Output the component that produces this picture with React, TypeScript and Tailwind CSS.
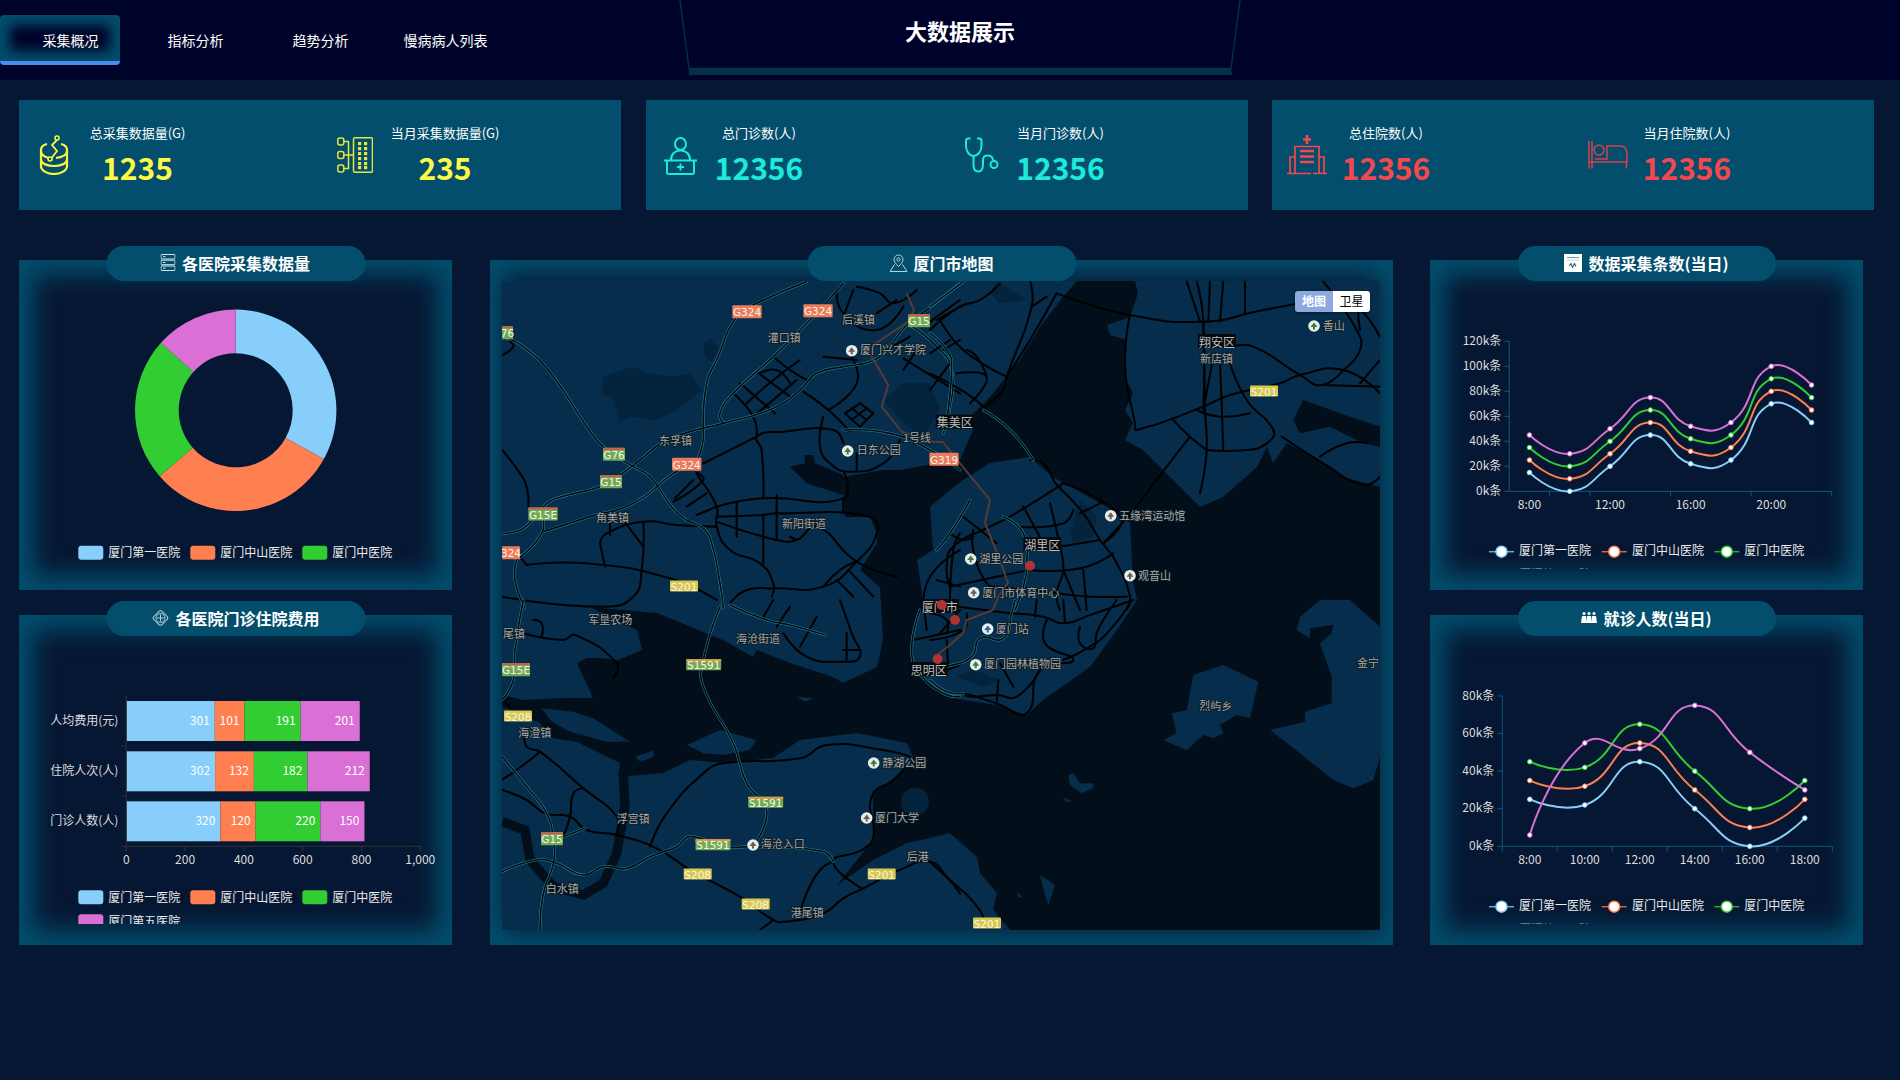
import React from 'react';

const BLUE = '#87cefa', ORANGE = '#ff7f50', GREEN = '#32cd32', PURPLE = '#da70d6';
const LABEL = '#dddddd';

/* ---------- icons ---------- */
const IconDb = () => (
  <svg viewBox="0 0 30 40" className="w-[30px] h-[40px]" fill="none" stroke="#fdf53f" strokeWidth="2.2">
    <path d="M8 9C4 10 2 12 2 15V31C2 36 9 39 15 39C21 39 28 36 28 31V15C28 12 26 10 22 9" />
    <path d="M2 24C2 29 9 31 15 31C21 31 28 29 28 24" />
    <path d="M2 16C2 20 6 22 10 23M28 16C28 20 24 22 17 23" />
    <path d="M18 5L13 10L18 16L12.5 23" strokeWidth="1.8" />
    <circle cx="18" cy="3" r="2" strokeWidth="1.6" />
    <circle cx="11" cy="24" r="2" strokeWidth="1.6" />
  </svg>
);
const IconNodes = () => (
  <svg viewBox="0 0 36 36" className="w-[36px] h-[36px]" fill="none" stroke="#e9e63f" strokeWidth="1.5">
    <rect x="16.5" y="0.8" width="19" height="34.4" rx="1.5" />
    <rect x="0.8" y="1" width="6" height="7" rx="2" />
    <rect x="0.8" y="14.5" width="6" height="7" rx="2" />
    <rect x="0.8" y="28" width="6" height="7" rx="2" />
    <path d="M7 4.5H11.5V31.5H7M7 18H16.5" />
    <g fill="#e9e63f" stroke="none">
      {[5, 10, 15, 20, 25, 29].map((y) => (
        <React.Fragment key={y}>
          <rect x="21" y={y} width="3.2" height="3.2" />
          <rect x="27" y={y} width="3.2" height="3.2" />
        </React.Fragment>
      ))}
    </g>
  </svg>
);
const IconNurse = () => (
  <svg viewBox="0 0 33 38" className="w-[33px] h-[38px]" fill="none" stroke="#1de9dc" strokeWidth="2">
    <ellipse cx="16.5" cy="7" rx="5.5" ry="6" />
    <path d="M7 23C7 17 11 13.5 16.5 13.5S26 17 26 23" />
    <path d="M0 23.5H33" />
    <path d="M3 24V35.5Q3 37 5 37H28Q30 37 30 35.5V24" />
    <path d="M16.5 26.5V33.5M13 30H20" strokeWidth="2" />
  </svg>
);
const IconScope = () => (
  <svg viewBox="0 0 34 36" className="w-[34px] h-[36px]" fill="none" stroke="#1de9dc" strokeWidth="2">
    <path d="M5.5 1.5H3Q1 1.5 1 4V9C1 15 5 19 8.5 19C12 19 16.5 15 16.5 9V4Q16.5 1.5 14.5 1.5H12" />
    <path d="M8.5 19V28C8.5 33 11 34.5 13.5 34.5C17 34.5 18 31 18 27V23C18 20 20 18.5 22.5 18.5C25 18.5 27.5 20 28 23" />
    <circle cx="29" cy="27.5" r="3.5" />
  </svg>
);
const IconHospital = () => (
  <svg viewBox="0 0 40 40" className="w-[40px] h-[40px]" fill="none" stroke="#f4474f" strokeWidth="1.7">
    <path d="M20 0V9M16 4.5H24" strokeWidth="2.6" />
    <path d="M8 38V11.5H32V38" />
    <path d="M13 16H27M13 21.5H27M13 27H27" strokeWidth="2.4" />
    <path d="M8 22H3V38M32 22H37V38M0 38.5H24M26 38.5H40" />
  </svg>
);
const IconBed = () => (
  <svg viewBox="0 0 40 28" className="w-[40px] h-[28px]" fill="none" stroke="#d8404c" strokeWidth="1.5">
    <path d="M1 0V27.5M1 21H38.5V27.5M4 0V27.5" />
    <circle cx="11" cy="9" r="5" />
    <path d="M7 18H19V5H32Q39 5 39 13V21" />
  </svg>
);
const PillServer = () => (
  <svg viewBox="0 0 15 17" className="w-[15px] h-[17px]" fill="none" stroke="#d5e6ec" strokeWidth="1">
    <rect x="0.5" y="0.5" width="14" height="4.5" rx="0.5" />
    <rect x="0.5" y="6.2" width="14" height="4.5" rx="0.5" />
    <rect x="0.5" y="12" width="14" height="4.5" rx="0.5" />
    <path d="M2.5 2.7H5M2.5 8.5H5M2.5 14.2H5" />
  </svg>
);
const PillDiamond = () => (
  <svg viewBox="0 0 18 18" className="w-[18px] h-[18px]" fill="none" stroke="#b9d2dc" strokeWidth="1">
    <rect x="3.2" y="3.2" width="11.6" height="11.6" rx="2.5" transform="rotate(45 9 9)" />
    <circle cx="9" cy="9" r="4.5" />
    <path d="M9 5.5V12.5M5.5 9H12.5" />
  </svg>
);
const PillPin = () => (
  <svg viewBox="0 0 18 18" className="w-[18px] h-[18px]" fill="none" stroke="#b9d2dc" strokeWidth="1">
    <path d="M9 12.5C6 9.5 4.5 7.5 4.5 5.5A4.5 4.5 0 0 1 13.5 5.5C13.5 7.5 12 9.5 9 12.5Z" />
    <circle cx="9" cy="5.5" r="1.6" />
    <path d="M5 10.5L0.5 17.5H17.5L13 10.5" />
  </svg>
);
const PillDoc = () => (
  <svg viewBox="0 0 18 18" className="w-[18px] h-[18px]">
    <rect width="18" height="18" fill="#ffffff" />
    <path d="M3 3.5H15" stroke="#6f97a8" strokeWidth="1" />
    <path d="M3 6H15" stroke="#c9d8de" strokeWidth="1" />
    <path d="M5 12L7 9.5L8.5 13.5L10.5 9.5L12 12.5" fill="none" stroke="#2f5f74" strokeWidth="1.1" />
  </svg>
);
const PillGroup = () => (
  <svg viewBox="0 0 16 11" className="w-[16px] h-[11px]" fill="#ffffff">
    <circle cx="3" cy="1.5" r="1.5" />
    <circle cx="8" cy="1.5" r="1.5" />
    <circle cx="13" cy="1.5" r="1.5" />
    <path d="M0 11L1 4H5L6 11Z" />
    <path d="M5.5 11L6 4H10L10.5 11Z" />
    <path d="M10 11L11 4H15L16 11Z" />
  </svg>
);

/* ---------- chart helpers ---------- */
type Pt = [number, number];
function smoothPath(p: Pt[]) {
  const cps: { prev: Pt; next: Pt }[] = p.map((c, i) => {
    if (i === 0 || i === p.length - 1) return { prev: c, next: c };
    const a = p[i - 1], b = p[i + 1];
    const vx = b[0] - a[0], vy = b[1] - a[1];
    let d0 = Math.hypot(c[0] - a[0], c[1] - a[1]);
    let d1 = Math.hypot(b[0] - c[0], b[1] - c[1]);
    const s = d0 + d1 || 1;
    d0 /= s; d1 /= s;
    return {
      prev: [c[0] - vx * 0.5 * d0, c[1] - vy * 0.5 * d0] as Pt,
      next: [c[0] + vx * 0.5 * d1, c[1] + vy * 0.5 * d1] as Pt,
    };
  });
  let d = `M${p[0][0]} ${p[0][1]}`;
  for (let i = 1; i < p.length; i++) {
    d += `C${cps[i - 1].next[0]} ${cps[i - 1].next[1]} ${cps[i].prev[0]} ${cps[i].prev[1]} ${p[i][0]} ${p[i][1]}`;
  }
  return d;
}
const roadPath = (s: string) => smoothPath(s.split(' ').map((q) => q.split(',').map(Number) as Pt));

const Txt = ({ x, y, children, anchor = 'start', fill = LABEL, size = 12 }: any) => (
  <text x={x} y={y - 1} textAnchor={anchor} fill={fill} fontSize={size} dominantBaseline="central">{children}</text>
);

const HOSPITALS = ['厦门第一医院', '厦门中山医院', '厦门中医院', '厦门第五医院'];
const COLORS = [BLUE, ORANGE, GREEN, PURPLE];

const SwatchLegend = ({ y, count }: { y: number; count: number }) => {
  const xs = [78.3, 190.3, 302.3, 78.3];
  return (
    <g>
      {HOSPITALS.slice(0, count).map((h, i) => {
        const yy = i === 3 ? y + 24 : y;
        return (
          <g key={h}>
            <rect x={xs[i]} y={yy - 7} width={25} height={14} rx={3} fill={COLORS[i]} />
            <Txt x={xs[i] + 30} y={yy} fill="#eeeeee">{h}</Txt>
          </g>
        );
      })}
    </g>
  );
};

const LineLegend = ({ y }: { y: number }) => {
  const xs = [1489, 1601.7, 1714.3, 1489];
  const tx = [1519, 1632, 1744.3, 1519];
  return (
    <g>
      {HOSPITALS.map((h, i) => {
        const yy = i === 3 ? y + 24 : y;
        return (
          <g key={h}>
            <path d={`M${xs[i]} ${yy}h25`} stroke={COLORS[i]} strokeWidth={1.5} opacity={0.8} />
            <circle cx={xs[i] + 12.5} cy={yy} r={5.5} fill="#fff" stroke={COLORS[i]} strokeWidth={1.5} />
            <Txt x={tx[i]} y={yy - 1} fill="#eeeeee">{h}</Txt>
          </g>
        );
      })}
    </g>
  );
};

const Donut = () => {
  const cx = 235.7, cy = 410.3, R = 100.7, r = 57;
  const vals = [335, 310, 234, 135];
  const total = 1014;
  let a = 0;
  const pt = (rad: number, ang: number): Pt => [cx + rad * Math.sin(ang), cy - rad * Math.cos(ang)];
  return (
    <svg viewBox="19 260 433 330" className="block w-full h-full">
      {vals.map((v, i) => {
        const a0 = a;
        a += (v / total) * Math.PI * 2;
        const large = a - a0 > Math.PI ? 1 : 0;
        const [x0, y0] = pt(R, a0), [x1, y1] = pt(R, a), [x2, y2] = pt(r, a), [x3, y3] = pt(r, a0);
        return (
          <path key={i} fill={COLORS[i]}
            d={`M${x0} ${y0}A${R} ${R} 0 ${large} 1 ${x1} ${y1}L${x2} ${y2}A${r} ${r} 0 ${large} 0 ${x3} ${y3}Z`} />
        );
      })}
      <SwatchLegend y={552.7} count={3} />
    </svg>
  );
};

const Bars = () => {
  const x0 = 126.3, k = 0.294;
  const rows = [
    { name: '人均费用(元)', y: 701, v: [301, 101, 191, 201] },
    { name: '住院人次(人)', y: 751.3, v: [302, 132, 182, 212] },
    { name: '门诊人数(人)', y: 801.3, v: [320, 120, 220, 150] },
  ];
  return (
    <svg viewBox="19 615 433 330" className="block w-full h-full">
      <defs>
        <clipPath id="clipBar"><rect x="19" y="615" width="433" height="309" /></clipPath>
      </defs>
      <g clipPath="url(#clipBar)">
        {rows.map((r) => {
          let x = x0;
          return (
            <g key={r.name}>
              <Txt x={118.3} y={r.y + 19.5} anchor="end">{r.name}</Txt>
              {r.v.map((v, i) => {
                const w = v * k;
                const sx = x;
                x += w;
                return (
                  <g key={i}>
                    <rect x={sx} y={r.y} width={w} height={40} fill={COLORS[i]} />
                    <Txt x={sx + w - 5} y={r.y + 19.5} anchor="end" fill="#ffffff">{v}</Txt>
                  </g>
                );
              })}
            </g>
          );
        })}
        <path d="M126.3 695.7V851M121.3 746H126.3M121.3 796H126.3M121.3 846.3H420.8" stroke="#333333" fill="none" />
        {[0, 200, 400, 600, 800, 1000].map((v) => {
          const x = x0 + v * k;
          return (
            <g key={v}>
              <path d={`M${x} 846.3v5`} stroke="#333333" />
              <Txt x={x} y={859.7} anchor="middle">{v === 1000 ? '1,000' : v}</Txt>
            </g>
          );
        })}
        <SwatchLegend y={897.3} count={4} />
      </g>
    </svg>
  );
};

const Lines = ({ vb, clipId, axisX, base, h, max, step, bandW, n, data, labels, ticks, legendY, labelRight }: any) => {
  const sy = (v: number) => base - (v / max) * h;
  const px = (i: number) => axisX + bandW * (i + 0.5);
  const yTicks: number[] = [];
  for (let v = 0; v <= max; v += step) yTicks.push(v);
  return (
    <svg viewBox={vb} className="block w-full h-full">
      <defs>
        <clipPath id={clipId}><rect x="1430" y={base - 260} width="433" height={337.2} /></clipPath>
      </defs>
      <g clipPath={`url(#${clipId})`}>
        <path d={`M${axisX} ${base - h}V${base}H${axisX + bandW * n}`} stroke="#0b5a78" fill="none" />
        {yTicks.map((v) => (
          <g key={v}>
            <path d={`M${axisX - 5} ${sy(v)}h5`} stroke="#0b5a78" />
            <Txt x={labelRight} y={sy(v) - 1} anchor="end">{`${v}k条`}</Txt>
          </g>
        ))}
        {ticks.map((t: number) => (
          <path key={t} d={`M${axisX + bandW * t} ${base}v5`} stroke="#0b5a78" />
        ))}
        {labels.map((l: [number, string]) => (
          <Txt key={l[1]} x={px(l[0])} y={base + 13.4} anchor="middle">{l[1]}</Txt>
        ))}
        {data.map((s: number[], si: number) => {
          const pts = s.map((v, i) => [px(i), sy(v)] as Pt);
          return (
            <g key={si}>
              <path d={smoothPath(pts)} fill="none" stroke={COLORS[si]} strokeWidth={2} />
              {pts.map((p, i) => (
                <circle key={i} cx={p[0]} cy={p[1]} r={2.3} fill="#ffffff" stroke={COLORS[si]} strokeWidth={1} />
              ))}
            </g>
          );
        })}
        <LineLegend y={legendY} />
      </g>
    </svg>
  );
};

/* ---------- map ---------- */
const ROAD_Z8 = [
  '36,600 90,670 110,710 115,770', '36,315 70,290 60,275',
  '550,755 640,690 620,670 680,770 680,830 720,900 810,940 850,1000 845,1040',
  '680,770 820,745 1060,745 1062,665', '1060,745 1060,790',
  '680,800 820,795 860,790 1140,800 1160,850 1100,935 1000,1010 850,1015 770,1020 720,1060',
  '680,815 860,870 920,870 980,830 1100,935 1220,980', '740,755 740,860', '820,745 815,600 800,560 880,545 1030,540 1060,580',
  '860,735 860,870', '640,640 800,560', '555,745 610,690', '590,770 650,730', '620,795 680,770',
  '330,880 350,850 460,815 560,825 680,830', '330,880 345,950', '110,945 90,920', '110,945 290,940 540,985 680,1050',
  '460,815 455,960 430,1040 340,1070 36,1040', '360,800 360,855', '400,810 460,890', '820,795 820,940',
  '730,430 790,500 800,555', '750,400 855,490', '800,365 900,440', '850,320 950,390 965,380', '770,460 850,390 930,330', '790,500 920,390', '810,370 860,360 900,400',
  '940,425 1015,480 1080,545', '1015,480 1100,400 1085,320', '1000,500 990,590 1020,640 1080,665 1180,640 1230,570', '1100,660 1100,610',
  '1065,490 1110,460', '1110,460 1150,490', '1150,490 1110,530', '1110,530 1065,490', '1085,475 1130,510', '1130,475 1085,510',
  '1240,325 1410,430', '1040,120 1060,190 1160,240 1240,170', '1100,110 1170,130 1210,160 1280,120', '1160,190 1220,150', '1090,120 1060,200',
  '1300,230 1410,150', '1340,210 1410,170', '1360,300 1410,270', '1170,310 1260,260', '1280,300 1240,360', '1000,320 1100,330',
  '1000,1010 1050,960 1100,935', '1040,990 1090,1040', '1080,965 1150,1040', '900,860 920,870', '1300,1080 1320,980 1410,900',
  '1380,1080 1390,900 1410,850', '1340,990 1410,1010',
];
const ROAD_Z9 = [
  '0,240 90,170 150,150 210,100', '0,370 110,430 170,480', '30,210 100,300 230,380', '300,93 305,170 230,380 220,420 150,480',
  '380,130 300,270 230,380', '380,130 600,195 820,215 1000,180 1160,150', '800,93 820,215 820,480', '770,93 810,215',
  '600,195 585,350 615,520 620,540 820,470 900,435 1050,400 1110,375 1240,360 1350,430', '880,93 870,215', '945,93 945,190', '840,93 835,215',
  '820,215 825,480 830,600 810,730', '850,320 820,480', '870,330 880,600', '900,340 950,450 1030,540 1010,580 950,600 830,600',
  '730,510 780,560 830,600', '780,560 710,650 610,780 520,880', '905,290 970,290 1110,375 1175,405 1240,360', '1175,405 1350,410',
  '1240,360 1290,300 1280,240 1180,95', '1290,240 1290,180 1350,260', '1290,400 1350,330', '1055,560 1180,640 1300,705 1350,680', '1170,620 1250,580 1310,580',
  '300,630 340,640 385,710 400,700 510,750 570,800 570,830 520,880', '385,710 240,800 180,830 70,890 50,950 60,1010',
  '385,710 460,790 510,870 555,930 600,1040 590,1080', '300,960 450,955 550,910', '360,760 390,890 400,960 380,1030 390,1080', '280,770 340,880', '270,830 400,820 430,780',
  '60,1010 200,980 300,960', '130,840 130,900 170,1000 200,1010', '100,800 200,880', '60,850 100,870 130,860',
  '0,420 60,340', '110,300 140,320 170,380', '80,370 170,380 120,460', '60,270 0,310', '450,790 510,760', '400,960 450,1080', '460,960 470,1080', '200,1010 380,1030 480,1040 590,1040',
  '800,480 870,500 960,490', '390,890 510,870', '305,170 350,140',
];
const ROAD_Z10 = [
  '100,100 220,120 255,105 380,190 370,235', '130,60 155,70 155,110', '105,400 110,440 150,455 280,565 380,650 380,700', '280,565 250,580 240,650 220,710',
  '150,455 100,495 36,540', '36,570 110,600 165,640 240,650 290,690 380,705 500,745 600,810 750,890 850,960 885,965 1000,940 1060,895 1120,865 1240,805 1320,785 1370,830 1410,880',
  '480,740 530,640 640,520 700,490 930,475 1010,435 1180,450 1260,470', '1240,510 1210,540 1145,590 1150,710 1115,750 1030,785 1115,865', '1030,785 990,810 950,880 930,940', '850,960 810,990',
  '880,100 950,170 1050,185 1110,170 1085,100 1050,0', '930,140 980,50', '860,80 900,20', '1070,100 1070,180', '1110,150 1060,150', '820,50 850,0', '1270,120 1410,90', '1310,90 1300,0', '1350,100 1410,30', '1370,120 1375,200', '1370,210 1410,195',
  '36,300 60,320',
];
const ROAD_Z11 = [
  '240,40 340,50 400,70 480,45 610,0', '350,60 345,130 430,180 330,210 290,340 200,310 100,280 50,275 0,240', '205,240 200,310', '450,80 450,130 490,145 500,100 520,60 560,0',
  '400,180 480,140 540,90 600,10', '50,100 50,60 0,40', '100,280 120,290 200,285 260,290 330,210', '0,785 60,840 130,905 165,960', '0,120 100,90 110,40', '210,190 250,260', '0,10 240,40', '400,0 405,70', '320,0 315,50',
];
const HWY_Z8 = [
  '36,260 100,290 190,380 290,530 345,595 430,650 480,680 545,770 590,810 640,835 665,880 690,1000 700,1075',
  '36,850 100,835 160,770 200,745 330,710 390,675 450,630 520,575 600,545 700,520 850,475 930,420 980,370 1060,350 1140,335 1190,300 1250,225 1310,180 1410,100',
  '640,540 650,400 680,330 740,200 800,160 950,95', '700,520 690,490 730,430 850,320 960,210 1060,100',
  '1260,225 1340,290 1385,360 1375,500 1360,550', '1060,540 1200,550 1320,600 1410,660', '80,930 75,990 105,1075', '155,790 155,850 80,930',
  '160,845 300,800 430,760 550,670 620,630 640,540',
];
const HWY_Z9 = [
  '0,170 100,95', '0,250 50,300 65,350 45,540', '160,480 240,540 310,630', '220,800 280,850 290,950 280,1010 255,1080', '120,750 60,850 20,900',
];
const HWY_Z10 = [
  '690,20 640,180 640,260 730,430 770,550 830,630 795,730', '36,815 140,780 200,790 280,825 340,800 410,805 480,770 560,740 600,710 700,740 790,740 1000,755 1030,785',
  '36,470 110,560 170,640 190,720 190,790 160,880 150,990', '220,710 285,685', '100,0 75,150 70,240 36,300', '720,15 830,60 900,75 1005,105', '1290,30 1265,150 1290,220 1360,280 1410,290',
];
const HWY_Z11 = ['255,0 245,40 220,115 150,115 125,170 50,200 0,210', '0,240 50,275 100,280'];

const MAP_LABELS: [string, number, number][] = [
  ['后溪镇', 842, 319.3], ['灌口镇', 767.7, 337], ['厦门兴才学院', 860, 349], ['东孚镇', 659, 440], ['角美镇', 596, 516.7], ['新阳街道', 782, 522.7],
  ['日东公园', 856.7, 449.3], ['1号线', 903, 437], ['新店镇', 1200, 358], ['香山', 1322.7, 324.7], ['五缘湾运动馆', 1119.3, 515], ['观音山', 1138, 575],
  ['湖里公园', 979.3, 557.7], ['厦门市体育中心', 982.3, 591.7], ['军垦农场', 588.3, 619.3], ['海沧街道', 736, 638.3], ['海澄镇', 518.3, 731.7], ['静湖公园', 882.3, 761.7],
  ['浮宫镇', 616.7, 818.3], ['厦门大学', 875, 816.7], ['海沧入口', 760.7, 843.3], ['后港', 906.7, 855.7], ['白水镇', 545.7, 888.3], ['港尾镇', 790.7, 912.3], ['尾镇', 503, 632.7],
  ['厦门站', 995.7, 627.7], ['厦门园林植物园', 984, 663.3], ['烈屿乡', 1199.3, 705.3], ['金宁', 1357, 662.3],
];
const DISTRICTS: [string, number, number][] = [
  ['集美区', 936.7, 421.7], ['翔安区', 1199, 341], ['湖里区', 1024.3, 544], ['厦门市', 921.7, 606], ['思明区', 910.7, 669],
];
const BADGES: [string, number, number, number, string, string?][] = [
  ['G324', 747, 311.7, 29.3, '#ec7a5c'], ['G324', 818, 310.7, 29.3, '#ec7a5c'], ['G15', 919, 320.7, 22, '#73a955', '#c8604f'], ['76', 507.5, 332.7, 11, '#73a955', '#c8604f'],
  ['G76', 614, 454.3, 22, '#73a955', '#c8604f'], ['G15', 611, 481.7, 22, '#73a955', '#c8604f'], ['G15E', 543, 514, 29.3, '#73a955', '#c8604f'], ['G324', 686.7, 464.3, 29.3, '#ec7a5c'],
  ['324', 511, 552.7, 18, '#ec7a5c'], ['S201', 684, 586, 28, '#d9c84f'], ['G319', 944, 459.3, 29.3, '#ec7a5c'], ['S201', 1264, 391, 28, '#d9c84f'],
  ['G15E', 516, 669.7, 28, '#73a955', '#c8604f'], ['S1591', 703.7, 664.7, 35, '#73a955', '#e79a45'], ['S208', 518, 716, 28, '#d9c84f'], ['S1591', 765.7, 802.3, 35, '#73a955', '#e79a45'],
  ['S1591', 713, 844.7, 35, '#73a955', '#e79a45'], ['G15', 552, 838.7, 22, '#73a955', '#c8604f'], ['S208', 697.7, 874, 28, '#d9c84f'], ['S208', 755.7, 904, 28, '#d9c84f'],
  ['S201', 881.7, 874, 28, '#d9c84f'], ['S201', 987, 923, 28, '#d9c84f'],
];
const POIS: [number, number, string][] = [
  [851.7, 350.7, '#6a5a5a'], [847.7, 451, '#3f7a3f'], [1314, 326, '#3f7a3f'], [1110.7, 515.7, '#6a5a5a'], [1130, 575.7, '#6a5a5a'], [970.7, 559, '#3f7a3f'],
  [973.7, 592.7, '#6a5a5a'], [987.7, 629, '#3560a8'], [975.7, 664.7, '#3f7a3f'], [873.7, 763, '#3f7a3f'], [866.7, 818, '#6a5a5a'], [753, 845, '#6a5a5a'],
];
const REDS: Pt[] = [[1030, 565.7], [941.7, 605], [955, 620], [937.7, 659]];

const LAND = '#062d4b', WATER = '#020f1a', POND = '#04233c';

const SEA = '590,607 637,630 642,650 618,660 600,658 587,658 577,663 593,698 563,698 523,700 502,695 502,707 540,723 547,737 577,742 620,763 618,777 663,773 690,760 723,763 773,758 800,740 857,733 907,743 913,757 893,780 873,793 873,840 837,885 873,860 907,843 930,838 950,833 977,857 980,873 997,893 993,910 1010,930 1380,930 1380,487 1343,477 1323,463 1287,443 1273,463 1267,447 1257,467 1223,497 1200,507 1190,497 1163,470 1143,450 1125,440 1133,423 1125,410 1133,393 1125,377 1127,340 1110,335 1107,325 1130,317 1138,293 1135,281 1077,281 1063,297 1040,327 1020,360 990,397 970,417 973,430 960,460 943,462 900,470 883,470 843,477 845,517 870,517 877,533 877,543 860,570 880,587 883,640 877,667 843,683 833,677 790,663 757,650 753,657 723,640 703,632 657,613';
const XIAMEN = '912,637 913,672 943,695 963,700 997,705 1027,715 1043,700 1090,667 1117,630 1137,600 1133,583 1130,523 1107,507 1053,477 1030,457 990,463 963,480 950,490 930,507 933,550 917,560 923,600';

const RoadGroup = ({ t, roads, hwys }: { t: string; roads: string[]; hwys: string[] }) => (
  <g transform={t} fill="none" strokeLinejoin="round" strokeLinecap="round">
    {roads.map((r, i) => <path key={i} d={roadPath(r)} stroke="#000000" strokeWidth={6} />)}
    {hwys.map((r, i) => <path key={i} d={roadPath(r)} stroke="#2b8ea3" strokeWidth={8} />)}
    {hwys.map((r, i) => <path key={i} d={roadPath(r)} stroke="#020b12" strokeWidth={5} />)}
  </g>
);

const MapArt = () => (
  <svg viewBox="502 281 878 649" className="block w-full h-full">
    <rect x="502" y="281" width="878" height="649" fill={LAND} />
    <polygon points={SEA} fill={WATER} />
    <polygon points={XIAMEN} fill={LAND} />
    <g transform="translate(490 600) scale(.33333)">
      <path fill={LAND} d="M155,325 L250,335 L310,355 L420,425 L350,425 L240,395 L185,365 Z" />
      <path fill={LAND} d="M590,435 L690,390 L800,420 L780,450 L700,465 L640,460 Z" />
      <path fill={LAND} d="M435,470 L490,452 L492,470 L450,485 Z" />
      <path fill={LAND} d="M920,290 L970,295 L945,305 Z" />
      <path fill="none" stroke={WATER} strokeWidth={28} d="M400,520 L405,620 L380,760 L340,850 L280,885 L190,860 L120,780 L105,690 L36,665" />
      <circle cx="1275" cy="605" r="42" fill={POND} />
    </g>
    <g transform="translate(930 250) scale(.33333)">
      <path fill={WATER} d="M1090,510 L1120,450 L1230,490 L1350,530 L1350,590 L1300,580 L1200,530 L1110,550 Z" />
      <path fill={POND} d="M200,93 L290,150 L210,160 L180,130 Z" />
      <path fill={POND} d="M450,750 L500,800 L490,860 L430,880 L420,850 Z" />
    </g>
    <g transform="translate(490 250) scale(.33333)">
      <path fill={POND} d="M340,380 L430,350 L470,370 L550,380 L600,370 L635,420 L560,480 L500,510 L420,500 L390,520 L370,450 L335,430 Z" />
      <path fill={POND} d="M640,285 L660,265 L685,295 L665,335 L645,320 Z" />
      <path fill={WATER} d="M900,650 L945,640 L945,615 L970,615 L975,640 L1060,675 L1060,735 L950,700 Z" />
      <path fill={POND} d="M1240,400 L1320,400 L1350,480 L1300,560 L1230,510 L1180,450 Z" />
    </g>
    <g transform="translate(930 600) scale(.33333)">
      <path fill={LAND} d="M700,420 L740,400 L725,340 L770,330 L790,225 L880,195 L985,245 L960,355 L920,345 L870,375 L880,400 L850,415 L820,405 L770,450 Z" />
      <path fill={LAND} d="M1170,0 L1110,50 L1100,90 L1140,115 L1140,85 L1210,75 L1205,100 L1170,130 L1205,230 L1205,310 L1125,335 L1125,365 L1020,390 L1110,460 L1210,540 L1270,565 L1330,540 L1350,470 L1350,80 L1260,0 Z" />
      <path fill={LAND} d="M415,525 L430,520 L450,550 L490,550 L490,565 L455,580 L420,555 Z" />
      <path fill={LAND} d="M395,590 L430,605 L410,605 Z" />
      <path fill={LAND} d="M330,825 L375,855 L355,915 L340,865 Z" />
      <path fill={LAND} d="M262,875 L280,895 L265,890 Z" />
      <path fill={POND} d="M80,230 L130,210 L210,240 L160,260 Z" />
    </g>
    <RoadGroup t="translate(490 250) scale(.33333)" roads={ROAD_Z8} hwys={HWY_Z8} />
    <RoadGroup t="translate(930 250) scale(.33333)" roads={ROAD_Z9} hwys={HWY_Z9} />
    <RoadGroup t="translate(490 600) scale(.33333)" roads={ROAD_Z10} hwys={HWY_Z10} />
    <RoadGroup t="translate(930 600) scale(.33333)" roads={ROAD_Z11} hwys={HWY_Z11} />
    <polyline fill="none" stroke="#573a34" strokeWidth={2} strokeLinejoin="round"
      points="906.7,293.3 914,310 908.3,321.7 873.3,345 871.7,356.7 888.3,385 881.7,406.7 901.7,431.7 933.3,441.7 943,442 963,467 990,500 985,523 1000,560 1008,583 998,597 993,610 967,620 963,633 950,645 937,655" />
    {POIS.map(([x, y, c], i) => (
      <g key={i}>
        <circle cx={x} cy={y} r={5.8} fill="#e8eee8" />
        <path d={`M${x} ${y - 3.5}L${x + 3.5} ${y + 1}H${x + 1}V${y + 3.5}H${x - 1}V${y + 1}H${x - 3.5}Z`} fill={c} />
      </g>
    ))}
    {BADGES.map(([t, x, y, w, c, top], i) => {
      const hh = t.startsWith('S') ? 11 : 13;
      return (
        <g key={i}>
          <rect x={x - w / 2} y={y - hh / 2} width={w} height={hh} rx={1} fill={c} />
          {top && <rect x={x - w / 2} y={y - hh / 2} width={w} height={2} fill={top} />}
          <text x={x} y={y + 0.5} textAnchor="middle" dominantBaseline="central" fontSize={10.5} fill="#f6f6e8" fontFamily="'DejaVu Sans', sans-serif">{t}</text>
        </g>
      );
    })}
    {MAP_LABELS.map(([t, x, y], i) => (
      <text key={i} x={x} y={y} fontSize={11} fill="#a8a8a8" dominantBaseline="central" stroke="#0a1a22" strokeWidth={1.5} paintOrder="stroke">{t}</text>
    ))}
    {DISTRICTS.map(([t, x, y], i) => (
      <g key={i}>
        <rect x={x - 1} y={y - 7} width={38} height={14} fill="#050a0e" />
        <text x={x} y={y} fontSize={12} fill="#bdbdbd" dominantBaseline="central">{t}</text>
      </g>
    ))}
    {REDS.map(([x, y], i) => <circle key={i} cx={x} cy={y} r={5} fill="#b03232" />)}
  </svg>
);

/* ---------- layout ---------- */
const Panel = ({ title, icon, className, pill, children }: any) => (
  <div className={`relative shadow-[inset_0_0_24px_15px_#024e6c] ${className}`}>
    <div className={`absolute -top-[14px] left-1/2 -translate-x-1/2 h-[35px] pb-[2px] rounded-[18px] bg-[#024e6c] flex items-center justify-center gap-[6px] text-white font-bold text-[16px] leading-none whitespace-nowrap ${pill}`}>
      {icon}
      <span>{title}</span>
    </div>
    {children}
  </div>
);

const Stat = ({ icon, iconClass, textClass, label, value, color }: any) => (
  <div className="flex w-[301px] items-start">
    <div className={iconClass}>{icon}</div>
    <div className={`pt-[23px] flex flex-col items-center ${textClass}`}>
      <div className="text-[13px] leading-[20px] text-white whitespace-nowrap">{label}</div>
      <div className={`mt-[4px] text-[30px] leading-[40px] font-bold ${color}`}>{value}</div>
    </div>
  </div>
);

const TABS = ['采集概况', '指标分析', '趋势分析', '慢病病人列表'];

export default function App() {
  return (
    <div className="relative w-full h-screen overflow-hidden bg-[#061733] font-['Noto_Sans_CJK_SC','Noto_Sans',sans-serif]">
      <header className="relative h-[80px] bg-[#000329] pt-[15px] flex items-start">
        {TABS.map((t, i) => (
          <div key={t} className={`w-[120px] mr-[5px] h-[50px] pl-[21px] pt-[4px] flex items-center justify-center text-[14px] text-white whitespace-nowrap border-b-4 ${i === 0 ? 'rounded-[4px] border-[#4a8bf0] shadow-[inset_0_0_12px_10px_#024e6c]' : 'border-transparent'}`}>
            {t}
          </div>
        ))}
        <svg viewBox="0 0 562 76" className="absolute left-[679px] top-0 w-[562px] h-[76px]">
          <path d="M1 0L10 68.5H552L561 0" fill="none" stroke="#042c4a" strokeWidth="1.5" />
          <path d="M10 68H552L553 75H10Z" fill="#03304f" />
        </svg>
        <h1 className="absolute left-[905px] top-[14px] w-[110px] text-center text-[22px] leading-[32px] font-bold text-white whitespace-nowrap">大数据展示</h1>
      </header>

      <section className="mt-[20px] pl-[19px] flex">
        <div className="w-[602px] h-[110px] bg-[#024e6c] flex">
          <Stat icon={<IconDb />} iconClass="ml-[20px] mt-[35px] w-[30px]" textClass="ml-[20px] w-[97px]" label="总采集数据量(G)" value="1235" color="text-[#fdfa46]" />
          <Stat icon={<IconNodes />} iconClass="ml-[17px] mt-[37px] w-[36px]" textClass="ml-[18px] w-[108px]" label="当月采集数据量(G)" value="235" color="text-[#fdfa46]" />
        </div>
        <div className="ml-[25px] w-[602px] h-[110px] bg-[#024e6c] flex">
          <Stat icon={<IconNurse />} iconClass="ml-[18px] mt-[37px] w-[33px]" textClass="ml-[19px] w-[86px]" label="总门诊数(人)" value="12356" color="text-[#1de9dc]" />
          <Stat icon={<IconScope />} iconClass="ml-[18px] mt-[37px] w-[34px]" textClass="ml-[18px] w-[87px]" label="当月门诊数(人)" value="12356" color="text-[#1de9dc]" />
        </div>
        <div className="ml-[24px] w-[602px] h-[110px] bg-[#024e6c] flex">
          <Stat icon={<IconHospital />} iconClass="ml-[15px] mt-[35px] w-[40px]" textClass="ml-[17px] w-[84px]" label="总住院数(人)" value="12356" color="text-[#f4474f]" />
          <Stat icon={<IconBed />} iconClass="ml-[15px] mt-[41px] w-[40px]" textClass="ml-[16px] w-[86px]" label="当月住院数(人)" value="12356" color="text-[#f4474f]" />
        </div>
      </section>

      <main className="mt-[50px] pl-[19px] flex items-start">
        <div className="w-[433px] flex flex-col gap-[25px]">
          <Panel title="各医院采集数据量" icon={<PillServer />} className="w-[433px] h-[330px]" pill="w-[259px]">
            <Donut />
          </Panel>
          <Panel title="各医院门诊住院费用" icon={<PillDiamond />} className="w-[433px] h-[330px]" pill="w-[259px]">
            <Bars />
          </Panel>
        </div>
        <div className="ml-[38px] w-[903px]">
          <Panel title="厦门市地图" icon={<PillPin />} className="w-[903px] h-[685px] pt-[21px] pl-[12px] pr-[13px] pb-[15px]" pill="w-[269px] z-10">
            <div className="relative w-full h-full overflow-hidden">
              <MapArt />
              <div className="absolute left-[793px] top-[10px] flex h-[21px] w-[75px] rounded-[3px] overflow-hidden shadow-[0_1px_3px_rgba(0,0,0,.4)] text-[12px] leading-[20px] text-center">
                <span className="w-[38px] bg-[#8ea8e0] text-white font-bold">地图</span>
                <span className="w-[37px] bg-white text-black">卫星</span>
              </div>
            </div>
          </Panel>
        </div>
        <div className="ml-[37px] w-[433px] flex flex-col gap-[25px]">
          <Panel title="数据采集条数(当日)" icon={<PillDoc />} className="w-[433px] h-[330px]" pill="w-[258px]">
            <Lines vb="1430 260 433 330" clipId="clipL1" axisX={1509.3} base={491.3} h={150} max={120} step={20} bandW={40.3} n={8}
              data={[[15, 0, 20, 45, 22, 25, 70, 55], [25, 10, 30, 55, 32, 35, 80, 65], [35, 20, 40, 65, 42, 45, 90, 75], [45, 30, 50, 75, 52, 55, 100, 85]]}
              labels={[[0, '8:00'], [2, '12:00'], [4, '16:00'], [6, '20:00']]} ticks={[1, 2, 4, 6, 8]} legendY={551.7} labelRight={1501.3} />
          </Panel>
          <Panel title="就诊人数(当日)" icon={<PillGroup />} className="w-[433px] h-[330px]" pill="w-[258px]">
            <Lines vb="1430 615 433 330" clipId="clipL2" axisX={1502.3} base={846.3} h={150.3} max={80} step={20} bandW={55} n={6}
              data={[[25, 22, 45, 20, 0, 15], [35, 32, 55, 30, 10, 25], [45, 42, 65, 40, 20, 35], [6, 55, 52, 75, 50, 30]]}
              labels={[[0, '8:00'], [1, '10:00'], [2, '12:00'], [3, '14:00'], [4, '16:00'], [5, '18:00']]} ticks={[0, 1, 2, 3, 4, 5, 6]} legendY={906.7} labelRight={1494.3} />
          </Panel>
        </div>
      </main>
    </div>
  );
}
